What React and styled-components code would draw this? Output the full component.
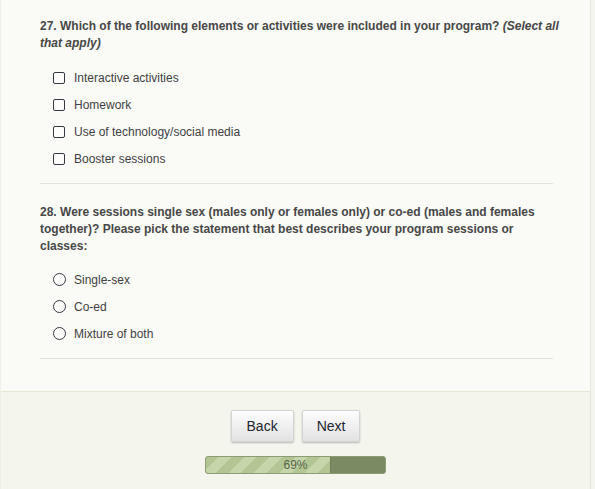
import React from "react";
import styled, { createGlobalStyle } from "styled-components";

const GlobalStyle = createGlobalStyle`
  html, body {
    margin: 0;
    padding: 0;
    background: #f4f5ee;
  }
  body {
    font-family: "Liberation Sans", Arial, sans-serif;
  }
`;

const Page = styled.div`
  width: 591px;
  min-height: 489px;
  display: flex;
  flex-direction: column;
  background: #fafaf6;
  border-right: 1px solid #e4e7da;
  border-left: 1px solid #eef0e6;
  box-sizing: border-box;
`;

const Main = styled.div`
  padding: 18px 37px 0 39px;
`;

const Question = styled.div`
  padding-top: ${(p) => (p.first ? "0" : "20px")};
  padding-bottom: 11px;
  border-bottom: 1px solid #e2e3da;
`;

const Title = styled.div`
  font-size: 12px;
  line-height: 17px;
  font-weight: bold;
  color: #474747;
  margin-right: -8px;
  em {
    font-style: italic;
  }
`;

const Options = styled.div`
  display: flex;
  flex-direction: column;
  margin-top: ${(p) => p.gap || 12}px;
  padding-left: 13px;
`;

const Option = styled.label`
  display: flex;
  align-items: center;
  height: 27px;
  font-size: 12px;
  color: #3f3f44;
`;

const Box = styled.span`
  width: 12px;
  height: 12px;
  box-sizing: border-box;
  border: 1.5px solid #333a44;
  border-radius: ${(p) => (p.round ? "50%" : "2px")};
  background: #fdfdfb;
  margin-right: 9px;
  flex: none;
  ${(p) => p.round && "width: 13px; height: 13px; margin-right: 8px;"}
`;

const Footer = styled.div`
  flex: 1;
  margin-top: 32px;
  border-top: 1px solid #e3e8d6;
  background: #f4f6ee;
  display: flex;
  flex-direction: column;
  align-items: center;
  padding-top: 18px;
`;

const Buttons = styled.div`
  display: flex;
  gap: 8px;
`;

const Button = styled.button`
  height: 32px;
  padding: 0 ${(p) => p.pad}px;
  font-family: "Liberation Sans", Arial, sans-serif;
  font-size: 14px;
  color: #1c2633;
  background: linear-gradient(#fdfdfd, #e2e2e2);
  border: 1px solid #d4d4d4;
  border-radius: 2px;
  box-shadow: 0 1px 2px rgba(0, 0, 0, 0.25);
  cursor: pointer;
`;

const Bar = styled.div`
  position: relative;
  margin-top: 14px;
  width: 181px;
  height: 18px;
  box-sizing: border-box;
  border: 1px solid #8d9c74;
  border-radius: 3px;
  background: #7a8a62;
  overflow: hidden;
`;

const Fill = styled.div`
  height: 100%;
  background: repeating-linear-gradient(
    -45deg,
    #b3c593 0px,
    #b3c593 9px,
    #c6d6aa 9px,
    #c6d6aa 18px
  );
  border-right: 1px solid #6e7e58;
`;

const Label = styled.span`
  position: absolute;
  inset: 0;
  display: flex;
  align-items: center;
  justify-content: center;
  font-size: 12px;
  color: #56634a;
`;

const q27 = [
  "Interactive activities",
  "Homework",
  "Use of technology/social media",
  "Booster sessions",
];

const q28 = ["Single-sex", "Co-ed", "Mixture of both"];

export default function App() {
  const progress = 69;
  return (
    <>
      <GlobalStyle />
      <Page>
        <Main>
          <Question first>
            <Title>
              27. Which of the following elements or activities were included
              in your program? <em>(Select all that apply)</em>
            </Title>
            <Options>
              {q27.map((o) => (
                <Option key={o}>
                  <Box />
                  {o}
                </Option>
              ))}
            </Options>
          </Question>
          <Question>
            <Title>
              28. Were sessions single sex (males only or females only) or
              co-ed (males and females together)? Please pick the statement
              that best describes your program sessions or classes:
            </Title>
            <Options gap={11}>
              {q28.map((o) => (
                <Option key={o}>
                  <Box round />
                  {o}
                </Option>
              ))}
            </Options>
          </Question>
        </Main>
        <Footer>
          <Buttons>
            <Button pad={15}>Back</Button>
            <Button pad={14}>Next</Button>
          </Buttons>
          <Bar>
            <Fill style={{ width: `${progress}%` }} />
            <Label>{progress}%</Label>
          </Bar>
        </Footer>
      </Page>
    </>
  );
}
